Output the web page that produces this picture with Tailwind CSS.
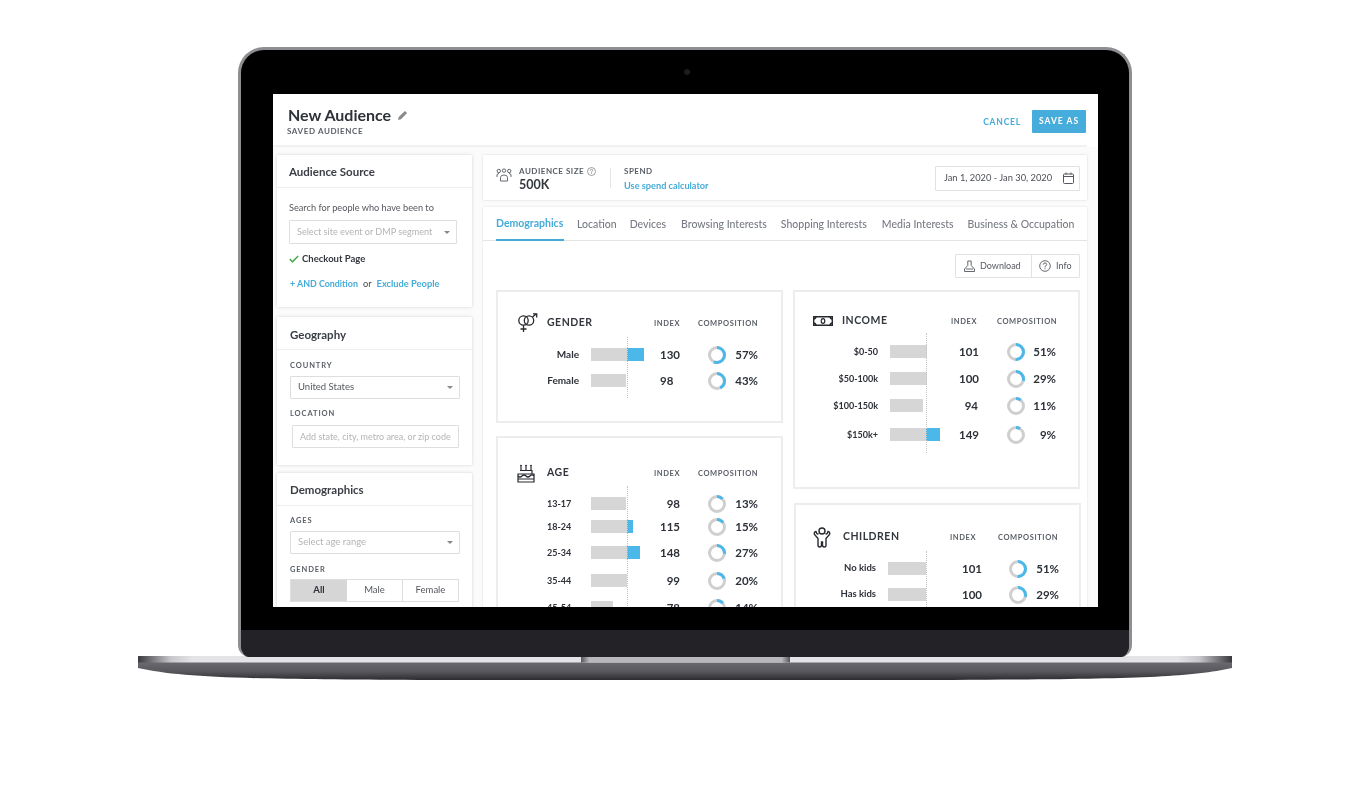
<!DOCTYPE html>
<html lang="en">
<head>
<meta charset="UTF-8">
<title>New Audience</title>
<script src="https://cdn.jsdelivr.net/npm/@tailwindcss/browser@4"></script>
</head>
<body class="bg-white w-[1371px] h-[800px] overflow-hidden font-[family-name:Lato,sans-serif] text-[#2d3138]">

<!-- laptop lid -->
<div class="relative ml-[238px] mt-[47px] w-[894px] h-[610px] rounded-t-[26px] rounded-b-[12px] border-x-[3px] border-t-[3px] border-[#8f8f93] bg-black overflow-hidden">
  <div class="absolute left-[443px] top-[19px] w-[6px] h-[6px] rounded-full bg-[#1c1c24]"></div>
  <div class="absolute left-0 right-0 bottom-0 h-[27px] bg-[#232327]"></div>

  <!-- screen -->
  <div class="relative ml-[32px] mt-[44px] w-[825px] h-[513px] bg-white overflow-hidden blur-[0.5px]">

    <!-- page header -->
    <div class="flex justify-between h-[53px] w-[814px] border-b-[2px] border-[#f1f1f1]">
      <div class="pl-[15px] pt-[11px]">
        <div class="flex items-center h-[20px]">
          <span class="text-[16px] font-bold">New Audience</span>
          <svg class="ml-[6px]" width="11" height="11" viewBox="0 0 11 11"><path d="M1 10l.7-3L7.900 .9l2.200 2.200L4 9.300z" fill="#8a8a8a"/></svg>
        </div>
        <div class="text-[8px] font-bold tracking-[0.6px] text-[#5a5e66] -ml-[1px]">SAVED AUDIENCE</div>
      </div>
      <div class="flex items-start pt-[16px]">
        <span class="mt-[6px] text-[8.5px] font-bold tracking-[0.8px] text-[#45acd8]">CANCEL</span>
        <span class="ml-[11px] mr-[1px] w-[54px] h-[23px] flex items-center justify-center bg-[#45acdb] rounded-[1px] text-white text-[8.5px] font-bold tracking-[1px]">SAVE AS</span>
      </div>
    </div>

    <div class="flex bg-[#fbfbfb] h-[460px]">
      <!-- sidebar -->
      <div class="ml-[4px] w-[195px] pt-[8px] shrink-0">
        <div class="bg-white h-[152px] shadow-[0_0_3px_rgba(0,0,0,0.16)]">
          <div class="h-[33px] pt-[2px] border-b border-[#eeeeee] pl-[12px] flex items-center text-[11.5px] font-bold text-[#3a3e45]">Audience Source</div>
          <div class="pl-[12px] pt-[14px]">
            <div class="text-[9.2px] leading-[12px] text-[#55585e]">Search for people who have been to</div>
            <div class="mt-[6px] w-[168px] h-[24px] border border-[#dedede] rounded-[1px] flex items-center justify-between pl-[7px] pr-[6px]">
              <span class="text-[9.1px] text-[#b4b4b4]">Select site event or DMP segment</span>
              <span class="w-0 h-0 border-x-[3px] border-x-transparent border-t-[3px] border-t-[#888888]"></span>
            </div>
            <div class="mt-[9px] flex items-center h-[12px]">
              <svg width="10" height="8" viewBox="0 0 10 8"><path d="M.8 4l2.600 2.800L9.200 1" fill="none" stroke="#4aa84f" stroke-width="1.500"/></svg>
              <span class="ml-[3px] text-[9.5px] font-bold text-[#33373d]">Checkout Page</span>
            </div>
            <div class="mt-[13px] flex items-center h-[12px] text-[9.3px] font-bold text-[#45acd8]">
              <span class="ml-[1px] text-[8.9px]">+ AND Condition</span>
              <span class="ml-[5px] font-normal text-[#44474d]">or</span>
              <span class="ml-[5px]">Exclude People</span>
            </div>
          </div>
        </div>

        <div class="mt-[10px] bg-white h-[148px] shadow-[0_0_3px_rgba(0,0,0,0.16)]">
          <div class="h-[33px] pt-[4px] border-b border-[#eeeeee] pl-[13px] flex items-center text-[11.5px] font-bold text-[#3a3e45]">Geography</div>
          <div class="pl-[13px]">
            <div class="mt-[11px] h-[9px] leading-[9px] text-[7.5px] font-bold tracking-[0.9px] text-[#5a5e66]">COUNTRY</div>
            <div class="mt-[6px] w-[170px] h-[23px] border border-[#dedede] rounded-[1px] flex items-center justify-between pl-[7px] pr-[6px]">
              <span class="text-[9.5px] text-[#55585e]">United States</span>
              <span class="w-0 h-0 border-x-[3px] border-x-transparent border-t-[3px] border-t-[#888888]"></span>
            </div>
            <div class="mt-[10px] h-[9px] leading-[9px] text-[7.5px] font-bold tracking-[0.9px] text-[#5a5e66]">LOCATION</div>
            <div class="mt-[7px] ml-[2px] w-[167px] h-[23px] border border-[#dedede] rounded-[1px] flex items-center pl-[7px]">
              <span class="text-[9px] text-[#b4b4b4] whitespace-nowrap">Add state, city, metro area, or zip code</span>
            </div>
          </div>
        </div>

        <div class="mt-[8px] bg-white h-[200px] shadow-[0_0_3px_rgba(0,0,0,0.16)]">
          <div class="h-[33px] pt-[2px] border-b border-[#eeeeee] pl-[13px] flex items-center text-[11.5px] font-bold text-[#3a3e45]">Demographics</div>
          <div class="pl-[13px]">
            <div class="mt-[10px] h-[9px] leading-[9px] text-[7.5px] font-bold tracking-[0.9px] text-[#5a5e66]">AGES</div>
            <div class="mt-[6px] w-[170px] h-[23px] border border-[#dedede] rounded-[1px] flex items-center justify-between pl-[7px] pr-[6px]">
              <span class="text-[9.5px] text-[#b4b4b4]">Select age range</span>
              <span class="w-0 h-0 border-x-[3px] border-x-transparent border-t-[3px] border-t-[#888888]"></span>
            </div>
            <div class="mt-[11px] h-[9px] leading-[9px] text-[7.5px] font-bold tracking-[0.9px] text-[#5a5e66]">GENDER</div>
            <div class="mt-[5px] w-[169px] h-[23px] border border-[#dedede] flex text-[9.5px]">
              <span class="w-[56px] bg-[#d6d6d6] flex items-center justify-center font-bold">All</span>
              <span class="w-[56px] border-r border-[#dedede] flex items-center justify-center text-[#55585e]">Male</span>
              <span class="flex-1 flex items-center justify-center text-[#55585e]">Female</span>
            </div>
          </div>
        </div>
      </div>

      <!-- main column -->
      <div class="ml-[11px] w-[604px] pt-[8px] shrink-0">
        <div class="bg-white h-[45px] shadow-[0_0_2px_rgba(0,0,0,0.16)] flex items-center pl-[13px]">
          <svg class="mb-[6px]" width="16" height="14" viewBox="0 0 16 14" fill="none" stroke="#55585e" stroke-width="0.9"><circle cx="2.800" cy="3" r="1.700"/><circle cx="8" cy="2.600" r="1.700"/><circle cx="13.200" cy="3" r="1.700"/><path d="M1 9V7q0-1.500 2-1.500M15 9V7q0-1.500-2-1.500"/><path d="M4.500 13V9.500q0-2.500 3.500-2.500t3.500 2.500V13z"/></svg>
          <div class="ml-[7px] mt-[2px] w-[91px]">
            <div class="flex items-center h-[11px]">
              <span class="text-[8px] font-bold tracking-[0.5px] text-[#5a5e66]">AUDIENCE SIZE</span>
              <svg class="ml-[3px]" width="9" height="9" viewBox="0 0 9 9" fill="none" stroke="#777777" stroke-width="0.7"><circle cx="4.500" cy="4.500" r="4"/><path d="M3.300 3.600q0-1.300 1.200-1.300t1.200 1.200q0 .7-1.200 1.300v.7M4.500 6.200v.8"/></svg>
            </div>
            <div class="mt-[1px] text-[12.5px] font-bold leading-[14px] text-[#33373d]">500K</div>
          </div>
          <div class="w-px h-[20px] bg-[#e4e4e4]"></div>
          <div class="ml-[13px] mt-[2px]">
            <div class="h-[11px] flex items-center text-[8px] font-bold tracking-[0.5px] text-[#5a5e66]">SPEND</div>
            <div class="mt-[2px] text-[9.2px] font-bold leading-[13px] text-[#45acd8]">Use spend calculator</div>
          </div>
          <div class="ml-auto mr-[7px] mb-[-1px] w-[145px] h-[25px] border border-[#e2e2e2] rounded-[1px] flex items-center justify-between pl-[8px] pr-[5px]">
            <span class="text-[9.3px] text-[#4b4e54]">Jan 1, 2020 - Jan 30, 2020</span>
            <svg width="11" height="12" viewBox="0 0 11 12" fill="none" stroke="#55585e" stroke-width="1"><rect x=".5" y="2" width="10" height="9.500" rx="1"/><path d="M.5 4.500h10M3 .5v2M8 .5v2"/></svg>
          </div>
        </div>

        <div class="relative mt-[7px] bg-white h-[420px] shadow-[0_0_2px_rgba(0,0,0,0.12)]">
          <!-- tabs -->
          <div class="relative flex h-[34px] border-b border-[#e4e4e4] pl-[13px] text-[10.5px] font-medium text-[#777b82]">
            <span class="w-[68px] h-[34px] pt-[2px] border-b-[2px] border-[#45acd8] flex items-center font-bold text-[#45acd8] whitespace-nowrap">Demographics</span>
            <span class="ml-[13px] h-[33px] pt-[2px] flex items-center">Location</span>
            <span class="ml-[13px] h-[33px] pt-[2px] flex items-center">Devices</span>
            <span class="ml-[15px] h-[33px] pt-[2px] flex items-center">Browsing Interests</span>
            <span class="ml-[14px] h-[33px] pt-[2px] flex items-center">Shopping Interests</span>
            <span class="ml-[15px] h-[33px] pt-[2px] flex items-center">Media Interests</span>
            <span class="ml-[14px] h-[33px] pt-[2px] flex items-center">Business &amp; Occupation</span>
          </div>

          <div class="flex justify-end mt-[13px] pr-[7px]">
            <div class="w-[125px] h-[24px] border border-[#e2e2e2] rounded-[1px] flex items-center text-[9px] text-[#55585e]">
              <div class="w-[76px] h-full border-r border-[#e2e2e2] flex items-center pl-[8px]">
                <svg width="11" height="12" viewBox="0 0 11 12" fill="none" stroke="#55585e" stroke-width="0.9"><path d="M3.800 5.500V1h3.400v4.500L10.500 9v2.500H.5V9z"/><path d="M2 9h7"/></svg>
                <span class="ml-[5px]">Download</span>
              </div>
              <div class="flex-1 flex items-center pl-[7px]">
                <svg width="12" height="12" viewBox="0 0 12 12" fill="none" stroke="#55585e" stroke-width="0.9"><circle cx="6" cy="6" r="5.300"/><path d="M4.300 4.700q0-1.800 1.700-1.800t1.700 1.700q0 1-1.700 1.800v1M6 8.300v1"/></svg>
                <span class="ml-[5px]">Info</span>
              </div>
            </div>
          </div>

          <div class="flex mt-[12px] pl-[13px]">
            <!-- left tiles -->
            <div class="w-[287px]">
              <!-- gender -->
              <div class="relative h-[133px] border-2 border-[#ededed]">
                <div class="absolute left-[129px] top-[45px] h-[61px] border-l border-dotted border-[#c4c4c4]"></div>
                <div class="flex items-center h-[20px] mt-[21px]">
                  <svg class="ml-[19px]" width="21" height="20" viewBox="0 0 21 20" fill="none" stroke="#26292e" stroke-width="1.300"><circle cx="6.500" cy="7.500" r="4.700"/><path d="M6.500 12.200v6.800M3.500 16h6"/><circle cx="12" cy="7.500" r="4.700"/><path d="M15.500 4l4-3.200M16 .8h3.700v3.600"/></svg>
                  <span class="ml-[9px] w-[107px] text-[10.5px] font-bold tracking-[0.5px] text-[#33373d]">GENDER</span>
                  <span class="mt-[2px] w-[44px] text-[7.5px] font-bold tracking-[0.6px] text-[#5a5e66]">INDEX</span>
                  <span class="mt-[2px] text-[7.5px] font-bold tracking-[0.6px] text-[#5a5e66]">COMPOSITION</span>
                </div>
                <div class="flex items-center h-[13px] mt-[15px] text-[10px] font-bold">
                  <span class="w-[81px] text-right">Male</span>
                  <div class="ml-[12px] w-[69px] flex h-[13px]"><span class="w-[36px] bg-[#d6d6d6]"></span><span class="w-[17px] bg-[#4cb8ea]"></span></div>
                  <span class="w-[20px] text-[11.5px] text-right">130</span>
                  <svg class="ml-[28px] -rotate-90" width="18" height="18" viewBox="0 0 18 18" fill="none" stroke-width="3"><circle cx="9" cy="9" r="7.500" stroke="#cfcfcf"/><circle cx="9" cy="9" r="7.500" stroke="#4cb8ea" pathLength="100" stroke-dasharray="57 100"/></svg>
                  <span class="w-[32px] text-[11.5px] text-right">57%</span>
                </div>
                <div class="flex items-center h-[13px] mt-[13px] text-[10px] font-bold">
                  <span class="w-[81px] text-right">Female</span>
                  <div class="ml-[12px] w-[69px] flex h-[13px]"><span class="w-[35px] bg-[#d6d6d6]"></span></div>
                  <span class="w-[20px] text-[11.5px]">98</span>
                  <svg class="ml-[28px] -rotate-90" width="18" height="18" viewBox="0 0 18 18" fill="none" stroke-width="3"><circle cx="9" cy="9" r="7.500" stroke="#cfcfcf"/><circle cx="9" cy="9" r="7.500" stroke="#4cb8ea" pathLength="100" stroke-dasharray="43 100"/></svg>
                  <span class="w-[32px] text-[11.5px] text-right">43%</span>
                </div>
              </div>
              <!-- age -->
              <div class="relative mt-[13px] h-[200px] border-2 border-[#ededed]">
                <div class="absolute left-[129px] top-[48px] h-[130px] border-l border-dotted border-[#c4c4c4]"></div>
                <div class="flex items-center h-[20px] mt-[25px]">
                  <svg class="ml-[19px]" width="18" height="19" viewBox="0 0 18 19" fill="none" stroke="#26292e" stroke-width="1.200"><path d="M4 1v5M9 1v5M14 1v5"/><path d="M4 .5l-1 1.500h2zM9 .5l-1 1.500h2zM14 .5l-1 1.500h2z" fill="#26292e" stroke="none"/><path d="M3 6.500h12V10M1 18V10h16v8z"/><path d="M1 12q2 2 4 0t4 0 4 0 4 0M1 15h16"/></svg>
                  <span class="ml-[12px] w-[107px] text-[10.5px] font-bold tracking-[0.5px] text-[#33373d]">AGE</span>
                  <span class="mt-[2px] w-[44px] text-[7.5px] font-bold tracking-[0.6px] text-[#5a5e66]">INDEX</span>
                  <span class="mt-[2px] text-[7.5px] font-bold tracking-[0.6px] text-[#5a5e66]">COMPOSITION</span>
                </div>
                <div class="flex items-center h-[13px] mt-[14px] text-[9px] font-bold">
                  <span class="ml-[49px] w-[44px]">13-17</span>
                  <div class="w-[69px] flex h-[13px]"><span class="w-[35px] bg-[#d6d6d6]"></span></div>
                  <span class="w-[20px] text-[11.5px] text-right">98</span>
                  <svg class="ml-[28px] -rotate-90" width="18" height="18" viewBox="0 0 18 18" fill="none" stroke-width="3"><circle cx="9" cy="9" r="7.500" stroke="#cfcfcf"/><circle cx="9" cy="9" r="7.500" stroke="#4cb8ea" pathLength="100" stroke-dasharray="13 100"/></svg>
                  <span class="w-[32px] text-[11.5px] text-right">13%</span>
                </div>
                <div class="flex items-center h-[13px] mt-[10px] text-[9px] font-bold">
                  <span class="ml-[49px] w-[44px]">18-24</span>
                  <div class="w-[69px] flex h-[13px]"><span class="w-[36px] bg-[#d6d6d6]"></span><span class="w-[6px] bg-[#4cb8ea]"></span></div>
                  <span class="w-[20px] text-[11.5px] text-right">115</span>
                  <svg class="ml-[28px] -rotate-90" width="18" height="18" viewBox="0 0 18 18" fill="none" stroke-width="3"><circle cx="9" cy="9" r="7.500" stroke="#cfcfcf"/><circle cx="9" cy="9" r="7.500" stroke="#4cb8ea" pathLength="100" stroke-dasharray="15 100"/></svg>
                  <span class="w-[32px] text-[11.5px] text-right">15%</span>
                </div>
                <div class="flex items-center h-[13px] mt-[13px] text-[9px] font-bold">
                  <span class="ml-[49px] w-[44px]">25-34</span>
                  <div class="w-[69px] flex h-[13px]"><span class="w-[36px] bg-[#d6d6d6]"></span><span class="w-[13px] bg-[#4cb8ea]"></span></div>
                  <span class="w-[20px] text-[11.5px] text-right">148</span>
                  <svg class="ml-[28px] -rotate-90" width="18" height="18" viewBox="0 0 18 18" fill="none" stroke-width="3"><circle cx="9" cy="9" r="7.500" stroke="#cfcfcf"/><circle cx="9" cy="9" r="7.500" stroke="#4cb8ea" pathLength="100" stroke-dasharray="27 100"/></svg>
                  <span class="w-[32px] text-[11.5px] text-right">27%</span>
                </div>
                <div class="flex items-center h-[13px] mt-[15px] text-[9px] font-bold">
                  <span class="ml-[49px] w-[44px]">35-44</span>
                  <div class="w-[69px] flex h-[13px]"><span class="w-[36px] bg-[#d6d6d6]"></span></div>
                  <span class="w-[20px] text-[11.5px] text-right">99</span>
                  <svg class="ml-[28px] -rotate-90" width="18" height="18" viewBox="0 0 18 18" fill="none" stroke-width="3"><circle cx="9" cy="9" r="7.500" stroke="#cfcfcf"/><circle cx="9" cy="9" r="7.500" stroke="#4cb8ea" pathLength="100" stroke-dasharray="20 100"/></svg>
                  <span class="w-[32px] text-[11.5px] text-right">20%</span>
                </div>
                <div class="flex items-center h-[13px] mt-[14px] text-[9px] font-bold">
                  <span class="ml-[49px] w-[44px]">45-54</span>
                  <div class="w-[69px] flex h-[13px]"><span class="w-[22px] bg-[#d6d6d6]"></span></div>
                  <span class="w-[20px] text-[11.5px] text-right">78</span>
                  <svg class="ml-[28px] -rotate-90" width="18" height="18" viewBox="0 0 18 18" fill="none" stroke-width="3"><circle cx="9" cy="9" r="7.500" stroke="#cfcfcf"/><circle cx="9" cy="9" r="7.500" stroke="#4cb8ea" pathLength="100" stroke-dasharray="14 100"/></svg>
                  <span class="w-[32px] text-[11.5px] text-right">14%</span>
                </div>
              </div>
            </div>

            <!-- right tiles -->
            <div class="ml-[10px] w-[288px]">
              <!-- income -->
              <div class="relative w-[287px] h-[199px] border-2 border-[#ededed]">
                <div class="absolute left-[131px] top-[41px] h-[120px] border-l border-dotted border-[#c4c4c4]"></div>
                <div class="flex items-center h-[20px] mt-[19px]">
                  <svg class="ml-[18px]" width="20" height="10" viewBox="0 0 20 10" fill="none" stroke="#26292e"><path d="M.7.7h18.600v8.600H.7z" stroke-width="1.400"/><path d="M.7 3Q2.500 3 3 .7M19.300 3Q17.500 3 17 .7M.7 7q1.800 0 2.300 2.300M19.300 7q-1.800 0-2.300 2.300" stroke-width="1.600"/><ellipse cx="10" cy="5" rx="1.800" ry="2.400" stroke-width="1.200"/></svg>
                  <span class="ml-[9px] w-[109px] text-[10.5px] font-bold tracking-[0.5px] text-[#33373d]">INCOME</span>
                  <span class="mt-[2px] w-[46px] text-[7.5px] font-bold tracking-[0.6px] text-[#5a5e66]">INDEX</span>
                  <span class="mt-[2px] text-[7.5px] font-bold tracking-[0.6px] text-[#5a5e66]">COMPOSITION</span>
                </div>
                <div class="flex items-center h-[13px] mt-[14px] text-[9px] font-bold">
                  <span class="w-[83px] text-right">$0-50</span>
                  <div class="ml-[12px] w-[69px] flex h-[13px]"><span class="w-[37px] bg-[#d6d6d6]"></span></div>
                  <span class="w-[19px] text-[11.5px] text-right">101</span>
                  <svg class="ml-[29px] -rotate-90" width="18" height="18" viewBox="0 0 18 18" fill="none" stroke-width="3"><circle cx="9" cy="9" r="7.500" stroke="#cfcfcf"/><circle cx="9" cy="9" r="7.500" stroke="#4cb8ea" pathLength="100" stroke-dasharray="51 100"/></svg>
                  <span class="w-[31px] text-[11.5px] text-right">51%</span>
                </div>
                <div class="flex items-center h-[13px] mt-[14px] text-[9px] font-bold">
                  <span class="w-[83px] text-right">$50-100k</span>
                  <div class="ml-[12px] w-[69px] flex h-[13px]"><span class="w-[37px] bg-[#d6d6d6]"></span></div>
                  <span class="w-[19px] text-[11.5px] text-right">100</span>
                  <svg class="ml-[29px] -rotate-90" width="18" height="18" viewBox="0 0 18 18" fill="none" stroke-width="3"><circle cx="9" cy="9" r="7.500" stroke="#cfcfcf"/><circle cx="9" cy="9" r="7.500" stroke="#4cb8ea" pathLength="100" stroke-dasharray="29 100"/></svg>
                  <span class="w-[31px] text-[11.5px] text-right">29%</span>
                </div>
                <div class="flex items-center h-[13px] mt-[14px] text-[9px] font-bold">
                  <span class="w-[83px] text-right">$100-150k</span>
                  <div class="ml-[12px] w-[69px] flex h-[13px]"><span class="w-[33px] bg-[#d6d6d6]"></span></div>
                  <span class="w-[19px] text-[11.5px] text-right">94</span>
                  <svg class="ml-[29px] -rotate-90" width="18" height="18" viewBox="0 0 18 18" fill="none" stroke-width="3"><circle cx="9" cy="9" r="7.500" stroke="#cfcfcf"/><circle cx="9" cy="9" r="7.500" stroke="#4cb8ea" pathLength="100" stroke-dasharray="11 100"/></svg>
                  <span class="w-[31px] text-[11.5px] text-right">11%</span>
                </div>
                <div class="flex items-center h-[13px] mt-[16px] text-[9px] font-bold">
                  <span class="w-[83px] text-right">$150k+</span>
                  <div class="ml-[12px] w-[69px] flex h-[13px]"><span class="w-[36px] bg-[#d6d6d6]"></span><span class="w-[14px] bg-[#4cb8ea]"></span></div>
                  <span class="w-[19px] text-[11.5px] text-right">149</span>
                  <svg class="ml-[29px] -rotate-90" width="18" height="18" viewBox="0 0 18 18" fill="none" stroke-width="3"><circle cx="9" cy="9" r="7.500" stroke="#cfcfcf"/><circle cx="9" cy="9" r="7.500" stroke="#4cb8ea" pathLength="100" stroke-dasharray="9 100"/></svg>
                  <span class="w-[31px] text-[11.5px] text-right">9%</span>
                </div>
              </div>
              <!-- children -->
              <div class="relative ml-[1px] mt-[14px] w-[287px] h-[120px] border-2 border-[#ededed]">
                <div class="absolute left-[130px] top-[46px] h-[60px] border-l border-dotted border-[#c4c4c4]"></div>
                <div class="flex items-center h-[20px] mt-[22px]">
                  <svg class="ml-[17px]" width="18" height="21" viewBox="0 0 18 21" fill="none" stroke="#26292e" stroke-width="1.400"><circle cx="9" cy="4" r="3"/><path d="M5.500 6.500Q4 8 3 4.500Q.6 5 1.500 7.500L5 11.500V18q0 2 1.700 2T8.500 18v-3h1v3q0 2 1.800 2t1.700-2V11.500l3.500-4q.9-2.500-1.500-3Q14 8 12.500 6.500"/></svg>
                  <span class="ml-[12px] w-[107px] text-[10.5px] font-bold tracking-[0.5px] text-[#33373d]">CHILDREN</span>
                  <span class="mt-[2px] w-[48px] text-[7.5px] font-bold tracking-[0.6px] text-[#5a5e66]">INDEX</span>
                  <span class="mt-[2px] text-[7.5px] font-bold tracking-[0.6px] text-[#5a5e66]">COMPOSITION</span>
                </div>
                <div class="flex items-center h-[13px] mt-[15px] text-[9.5px] font-bold">
                  <span class="w-[80px] text-right">No kids</span>
                  <div class="ml-[12px] w-[74px] flex h-[13px]"><span class="w-[38px] bg-[#d6d6d6]"></span></div>
                  <span class="w-[18px] text-[11.5px] text-right">101</span>
                  <svg class="ml-[29px] -rotate-90" width="18" height="18" viewBox="0 0 18 18" fill="none" stroke-width="3"><circle cx="9" cy="9" r="7.500" stroke="#cfcfcf"/><circle cx="9" cy="9" r="7.500" stroke="#4cb8ea" pathLength="100" stroke-dasharray="51 100"/></svg>
                  <span class="w-[32px] text-[11.5px] text-right">51%</span>
                </div>
                <div class="flex items-center h-[13px] mt-[13px] text-[9.5px] font-bold">
                  <span class="w-[80px] text-right">Has kids</span>
                  <div class="ml-[12px] w-[74px] flex h-[13px]"><span class="w-[38px] bg-[#d6d6d6]"></span></div>
                  <span class="w-[18px] text-[11.5px] text-right">100</span>
                  <svg class="ml-[29px] -rotate-90" width="18" height="18" viewBox="0 0 18 18" fill="none" stroke-width="3"><circle cx="9" cy="9" r="7.500" stroke="#cfcfcf"/><circle cx="9" cy="9" r="7.500" stroke="#4cb8ea" pathLength="100" stroke-dasharray="29 100"/></svg>
                  <span class="w-[32px] text-[11.5px] text-right">29%</span>
                </div>
              </div>
            </div>
          </div>
        </div>
      </div>
    </div>
  </div>
</div>

<!-- laptop base -->
<svg class="block ml-[138px] -mt-[1px]" width="1094" height="24" viewBox="0 0 1094 24">
  <defs>
    <linearGradient id="lip" x1="0" x2="1" y1="0" y2="0">
      <stop offset="0" stop-color="#3a3a3e"/><stop offset="0.03" stop-color="#c8c8cc"/><stop offset="0.05" stop-color="#e4e4e6"/><stop offset="0.95" stop-color="#e4e4e6"/><stop offset="0.97" stop-color="#c8c8cc"/><stop offset="1" stop-color="#3a3a3e"/>
    </linearGradient>
    <linearGradient id="under" x1="0" x2="0" y1="0" y2="1">
      <stop offset="0" stop-color="#6a6a70"/><stop offset="0.55" stop-color="#56565b"/><stop offset="1" stop-color="#2c2c30"/>
    </linearGradient>
    <linearGradient id="notch" x1="0" x2="1" y1="0" y2="0">
      <stop offset="0" stop-color="#55555a"/><stop offset="0.04" stop-color="#b7b7bc"/><stop offset="0.96" stop-color="#b7b7bc"/><stop offset="1" stop-color="#55555a"/>
    </linearGradient>
  </defs>
  <path d="M0 6V12C45 22 110 23 280 24H814C984 23 1049 22 1094 12V6Z" fill="url(#under)"/>
  <rect width="1094" height="6.500" fill="url(#lip)"/>
  <rect x="443" width="209" height="6.500" fill="url(#notch)"/>
</svg>

</body>
</html>
